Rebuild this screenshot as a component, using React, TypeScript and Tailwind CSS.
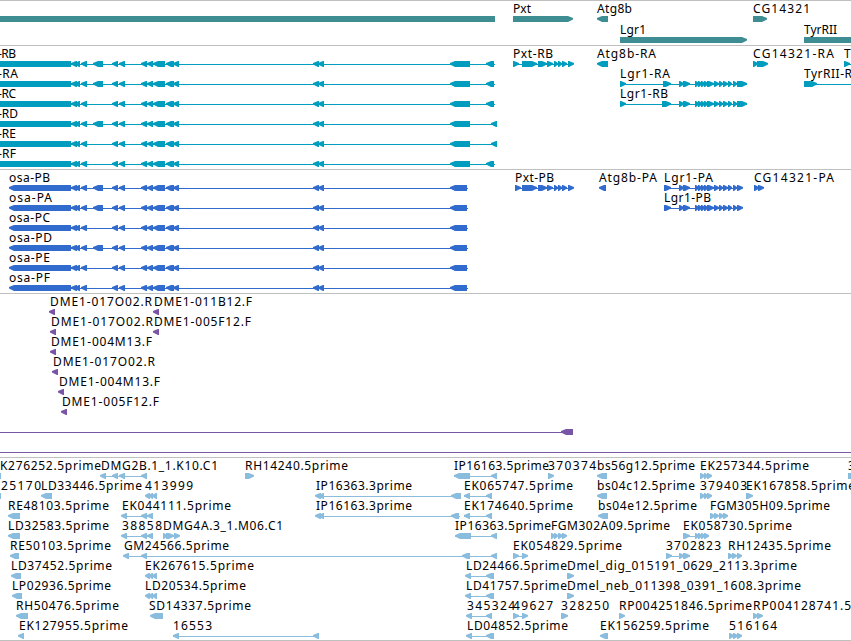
type Span = [number, number];

type Feature = {
    label?: string;
    // label start and drawn length
    x: number;
    w?: number;
    row: number;
    dir?: "l" | "r";
    parts: Span[];
    line?: Span;
};

type TrackData = {
    name: string;
    height: string;
    color: string;
    features: Feature[];
    rowHeight?: number;
};

const f = (label: string, x: number, w: number, row: number, dir: "l" | "r", parts: Span[], line?: Span): Feature => ({
    label,
    x,
    w,
    row,
    dir,
    parts,
    line,
});

const osaExons: Span[] = [
    [71, 77], [75, 80], [81, 87], [112, 118], [119, 125], [141, 147], [147, 153],
    [153, 165], [166, 174], [173, 179], [313, 319], [318, 324],
];
const osaExtra: Span = [93, 103];

const osa = (kind: "R" | "P") =>
    ["B", "A", "C", "D", "E", "F"].map((letter, row) => {
        const rna = kind === "R";
        const parts: Span[] = [[rna ? -30 : 9, 71], ...osaExons, [450, rna ? 470 : 467]];
        if ("BAD".includes(letter)) parts.push(osaExtra);
        const late = letter === "D" || letter === "E";
        if (rna) parts.push(late ? [491, 497] : [486, 494]);
        const end = rna ? (late ? 497 : 495) : 468;
        const wide = letter === "A" || letter === "D" ? 2 : 0;
        return rna
            ? f(`-R${letter}`, -2, 18 + wide, row, "l", parts, [71, end])
            : f(`osa-P${letter}`, 9, 41 + wide, row, "l", parts, [71, end]);
    });

const lgrExons: Span[] = [
    [679, 684], [683, 690], [695, 699], [698, 702], [701, 705], [704, 708],
    [707, 714], [714, 719], [719, 723], [723, 728], [728, 732], [733, 737],
];
const pxtExons: Span[] = [[522, 537], [538, 547], [547, 553], [554, 558], [558, 562], [562, 567], [568, 574]];
const triple = (x: number): Span[] => [[x, x + 5], [x + 4, x + 8], [x + 7, x + 12]];

const tracks: TrackData[] = [
    {
        name: "genes",
        height: "h-[45px]",
        color: "#3d8d93",
        rowHeight: 21,
        features: [
            f("Pxt", 513, 18, 0, "r", [[513, 573]]),
            f("Atg8b", 597, 35, 0, "l", [[597, 608]]),
            f("CG14321", 753, 57, 0, "r", [[753, 767]]),
            f("Lgr1", 620, 26, 1, "r", [[620, 747]]),
            f("TyrRII", 804, 33, 1, "r", [[804, 900]]),
            { x: 0, row: 0, dir: "l", parts: [[-20, 495]] },
        ],
    },
    {
        name: "transcripts",
        height: "h-[124px]",
        color: "#009dbf",
        features: [
            ...osa("R"),
            f("Pxt-RB", 513, 40, 0, "r", [[513, 519], ...pxtExons], [513, 573]),
            f("Atg8b-RA", 597, 59, 0, "l", [[597, 608]]),
            f("CG14321-RA", 753, 81, 0, "r", [[753, 758], [757, 768]]),
            f("T", 844, 7, 0, "r", [[844, 850]], [844, 860]),
            f("Lgr1-RA", 620, 50, 1, "r", [[620, 626], [663, 671], ...lgrExons, [737, 747]], [620, 747]),
            f("TyrRII-R", 804, 48, 1, "r", [[804, 817]], [804, 860]),
            f("Lgr1-RB", 620, 48, 2, "r", [[620, 626], [662, 671], ...lgrExons, [737, 747]], [620, 747]),
        ],
    },
    {
        name: "proteins",
        height: "h-[124px]",
        color: "#316bcd",
        features: [
            ...osa("P"),
            f("Pxt-PB", 515, 39, 0, "r", [[515, 521], ...pxtExons], [515, 573]),
            f("Atg8b-PA", 599, 58, 0, "l", [[599, 606]]),
            f("Lgr1-PA", 664, 49, 0, "r", [[664, 671], ...lgrExons, [737, 743]], [664, 742]),
            f("CG14321-PA", 754, 80, 0, "r", [[754, 759], [758, 764]]),
            f("Lgr1-PB", 664, 47, 1, "r", [[664, 671], ...lgrExons, [737, 743]], [664, 742]),
        ],
    },
    {
        name: "bac ends",
        height: "h-[164px]",
        color: "#7855a5",
        features: [
            f("DME1-017O02.R", 50, 102, 0, "l", [[49, 55]]),
            f("DME1-011B12.F", 154, 98, 0, "l", [[153, 159]]),
            f("DME1-017O02.R", 51, 102, 1, "l", [[50, 56]]),
            f("DME1-005F12.F", 154, 97, 1, "l", [[153, 159]]),
            f("DME1-004M13.F", 51, 101, 2, "l", [[50, 56]]),
            f("DME1-017O02.R", 53, 102, 3, "l", [[52, 58]]),
            f("DME1-004M13.F", 59, 101, 4, "l", [[58, 64]]),
            f("DME1-005F12.F", 62, 97, 5, "l", [[61, 67]]),
            { x: 0, row: 6, dir: "l", parts: [[561, 573]], line: [0, 573] },
            { x: 0, row: 7, dir: "l", parts: [], line: [0, 851] },
        ],
    },
    {
        name: "ests",
        height: "h-[183px]",
        color: "#89bcdd",
        features: [
            f("K276252.5prime", 0, 101, 0, "l", [[-12, 1]]),
            f("DMG2B.1_1.K10.C1", 101, 117, 0, "l", [[100, 106], [112, 118], [119, 125], [141, 147]], [101, 147]),
            f("RH14240.5prime", 245, 103, 0, "r", [[245, 254]]),
            f("IP16163.5prime", 454, 95, 0, "l", [[454, 470], [491, 497]], [454, 497]),
            f("370374", 548, 48, 0, "r", [[548, 554]]),
            f("bs56g12.5prime", 597, 98, 0, "l", [[597, 607]]),
            f("EK257344.5prime", 700, 109, 0, "r", triple(700)),
            f("3", 848, 7, 0, "r", [[848, 860]]),

            f("25170", 1, 40, 1, "l", [[-12, 1]]),
            f("LD33446.5prime", 41, 101, 1, "l", [[41, 52]]),
            f("413999", 145, 48, 1, "l", triple(145)),
            f("IP16363.3prime", 316, 96, 1, "l", [[315, 321], [319, 324], [451, 461]], [316, 461]),
            f("EK065747.5prime", 464, 109, 1, "l", [[464, 470], [486, 492]], [464, 492]),
            f("bs04c12.5prime", 597, 98, 1, "l", [[597, 607]]),
            f("379403", 700, 47, 1, "r", triple(700)),
            f("EK167858.5prime", 746, 109, 1, "r", [[746, 753]]),

            f("RE48103.5prime", 8, 101, 2, "l", [[8, 20]]),
            f("EK044111.5prime", 122, 109, 2, "l", [[121, 127], [141, 147], [147, 153]], [122, 153]),
            f("IP16163.3prime", 316, 96, 2, "l", [[315, 321], [319, 324], [451, 459]], [316, 460]),
            f("EK174640.5prime", 464, 109, 2, "l", [[464, 470], [486, 492]], [464, 492]),
            f("bs04e12.5prime", 598, 99, 2, "l", [[598, 608]]),
            f("FGM305H09.5prime", 710, 120, 2, "r", [[710, 715], [714, 719], [719, 724], [723, 728]]),

            f("LD32583.5prime", 8, 101, 3, "l", [[8, 20]]),
            f("38858", 122, 40, 3, "l", [[121, 127], [141, 147], [147, 153]], [122, 153]),
            f("DMG4A.3_1.M06.C1", 163, 120, 3, "r", [[163, 167], [166, 174], [174, 180]], [163, 179]),
            f("IP16363.5prime", 455, 96, 3, "l", [[455, 471], [491, 497]], [455, 497]),
            f("FGM302A09.5prime", 551, 119, 3, "r", [[551, 555], [554, 558], [558, 563], [562, 567]]),
            f("EK058730.5prime", 683, 109, 3, "r", [[683, 690], [695, 699], [698, 702], [701, 705], [704, 709]], [683, 709]),

            f("RE50103.5prime", 10, 101, 4, "l", [[10, 19]]),
            f("GM24566.5prime", 124, 105, 4, "l", [[123, 129], [141, 147], [462, 470], [491, 497]], [124, 497]),
            f("EK054829.5prime", 513, 109, 4, "r", [[513, 519], [522, 528]], [513, 527]),
            f("3702823", 666, 55, 4, "r", [[666, 672], [679, 684], [683, 690]], [666, 690]),
            f("RH12435.5prime", 728, 103, 4, "r", [[728, 733], [732, 737], [737, 742]]),

            f("LD37452.5prime", 11, 101, 5, "l", [[11, 21]]),
            f("EK267615.5prime", 145, 109, 5, "l", triple(145)),
            f("LD24466.5prime", 466, 101, 5, "l", [[465, 471], [486, 494]], [466, 494]),
            f("Dmel_dig_015191_0629_2113.3prime", 567, 230, 5, "r", [[567, 574]]),

            f("LP02936.5prime", 12, 99, 6, "l", [[12, 22]]),
            f("LD20534.5prime", 145, 101, 6, "l", triple(145)),
            f("LD41757.5prime", 466, 101, 6, "l", [[465, 471], [486, 494]], [466, 494]),
            f("Dmel_neb_011398_0391_1608.3prime", 567, 234, 6, "r", [[567, 574]]),

            f("RH50476.5prime", 16, 103, 7, "l", [[16, 28]]),
            f("SD14337.5prime", 149, 102, 7, "l", [[150, 163]]),
            f("345324", 467, 48, 7, "l", [[466, 472], [486, 492]], [467, 492]),
            f("49627", 513, 40, 7, "r", [[513, 519], [522, 528]], [513, 527]),
            f("328250", 561, 48, 7, "r", [[561, 568]]),
            f("RP004251846.5prime", 619, 133, 7, "r", [[619, 625]]),
            f("RP004128741.5", 753, 98, 7, "r", [[753, 758], [757, 763]]),

            f("EK127955.5prime", 19, 109, 8, "l", [[18, 24]]),
            f("16553", 173, 39, 8, "l", [[173, 179], [313, 319]], [173, 319]),
            f("LD04852.5prime", 467, 101, 8, "l", [[466, 472], [486, 494]], [467, 494]),
            f("EK156259.5prime", 600, 109, 8, "l", [[600, 608]]),
            f("516164", 729, 48, 8, "r", [[729, 734], [733, 738], [737, 742]]),
        ],
    },
];

function arrow([a, b]: Span, y: number, dir: "l" | "r") {
    const head = Math.min(b - a - 1, 5);
    if (dir === "l") {
        return `M${a} ${y + 2}L${a + head} ${y}H${b}V${y + 6}H${a + head}L${a} ${y + 3.5}Z`;
    }
    return `M${b} ${y + 2}L${b - head} ${y}H${a}V${y + 6}H${b - head}L${b} ${y + 3.5}Z`;
}

function Track({ track }: { track: TrackData }) {
    const rowHeight = track.rowHeight ?? 20;
    return (
        <section className={`w-full overflow-hidden border-t border-[#c0c0c0] ${track.height}`}>
            <svg className="-mt-px block h-full w-[851px]" role="img" aria-label={track.name}>
                {track.features.map((item, i) => {
                    const y = 16 + item.row * rowHeight;
                    return (
                        <g key={i} fill={track.color}>
                            {item.line && <rect x={item.line[0]} y={y + 3} width={item.line[1] - item.line[0]} height={1} />}
                            {item.parts.map((part, n) => (
                                <path key={n} d={arrow(part, y, item.dir ?? "l")} />
                            ))}
                            {item.label && (
                                <text
                                    className="fill-black font-['Noto_Sans',sans-serif] text-[12px]"
                                    x={item.x}
                                    y={y - 3}
                                    textLength={item.w}
                                >
                                    {item.label}
                                </text>
                            )}
                        </g>
                    );
                })}
            </svg>
        </section>
    );
}

export default function App() {
    return (
        <main className="flex h-[641px] w-[851px] flex-col overflow-hidden border-b border-[#c0c0c0] bg-white">
            {tracks.map((track) => (
                <Track key={track.name} track={track} />
            ))}
        </main>
    );
}
